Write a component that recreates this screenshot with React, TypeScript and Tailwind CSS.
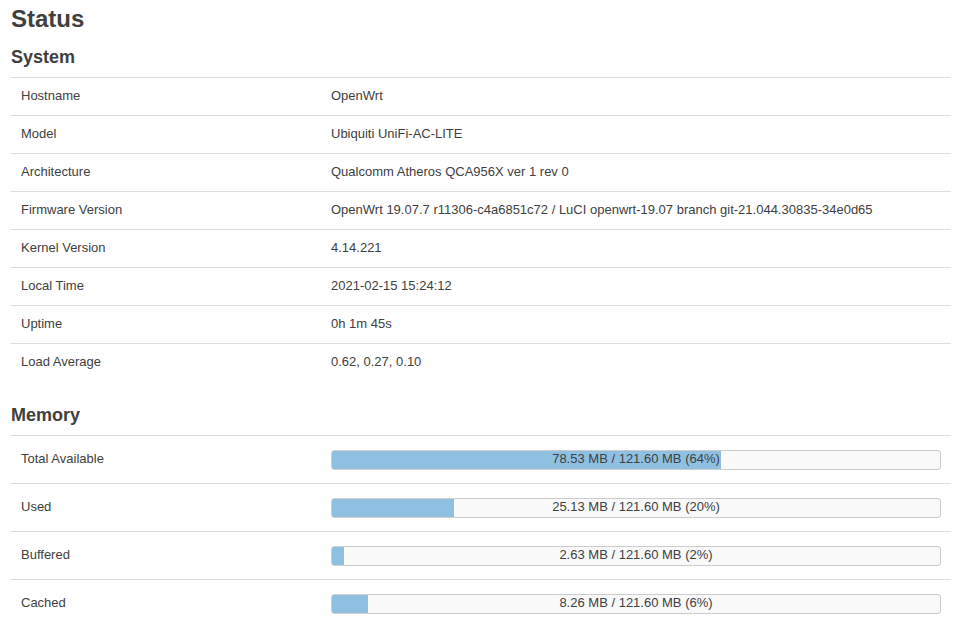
import React from "react";

const system: [string, string][] = [
  ["Hostname", "OpenWrt"],
  ["Model", "Ubiquiti UniFi-AC-LITE"],
  ["Architecture", "Qualcomm Atheros QCA956X ver 1 rev 0"],
  ["Firmware Version", "OpenWrt 19.07.7 r11306-c4a6851c72 / LuCI openwrt-19.07 branch git-21.044.30835-34e0d65"],
  ["Kernel Version", "4.14.221"],
  ["Local Time", "2021-02-15 15:24:12"],
  ["Uptime", "0h 1m 45s"],
  ["Load Average", "0.62, 0.27, 0.10"],
];

const memory: { label: string; used: string; pct: number }[] = [
  { label: "Total Available", used: "78.53", pct: 64 },
  { label: "Used", used: "25.13", pct: 20 },
  { label: "Buffered", used: "2.63", pct: 2 },
  { label: "Cached", used: "8.26", pct: 6 },
];

export default function App() {
  return (
    <div className="min-h-[644px] bg-white pl-[11px] pr-[24px] font-['Liberation_Sans',Arial,sans-serif] text-[#404040]">
      <h2 className="pt-[6px] text-[24px] font-bold leading-[26px]">Status</h2>
      <h3 className="mt-[15px] text-[18px] font-bold leading-[20px]">System</h3>
      <div className="mt-[10px] w-[940px]">
        {system.map(([k, v]) => (
          <div key={k} className="grid h-[38px] grid-cols-[310px_1fr] items-center border-t border-[#dddddd] pb-[2px] text-[13px] leading-[18px]">
            <div className="pl-[10px]">{k}</div>
            <div className="pl-[10px]">{v}</div>
          </div>
        ))}
      </div>
      <h3 className="mt-[24px] text-[18px] font-bold leading-[20px]">Memory</h3>
      <div className="mt-[10px] w-[940px]">
        {memory.map((m) => (
          <div key={m.label} className="grid h-[48px] grid-cols-[310px_1fr] items-center border-t border-[#dddddd] text-[13px] leading-[18px]">
            <div className="pb-[2px] pl-[10px]">{m.label}</div>
            <div className="px-[10px]">
              <div className="relative h-[20px] overflow-hidden rounded-[3px] border border-[#cccccc] bg-[#f9f9f9]">
                <div
                  className="absolute inset-y-0 left-0 bg-[#8fc0e1]"
                  style={{ width: `${m.pct}%` }}
                />
                <div className="relative text-center text-[13px] leading-[16px] text-[#404040]">
                  {m.used} MB / 121.60 MB ({m.pct}%)
                </div>
              </div>
            </div>
          </div>
        ))}
      </div>
    </div>
  );
}
